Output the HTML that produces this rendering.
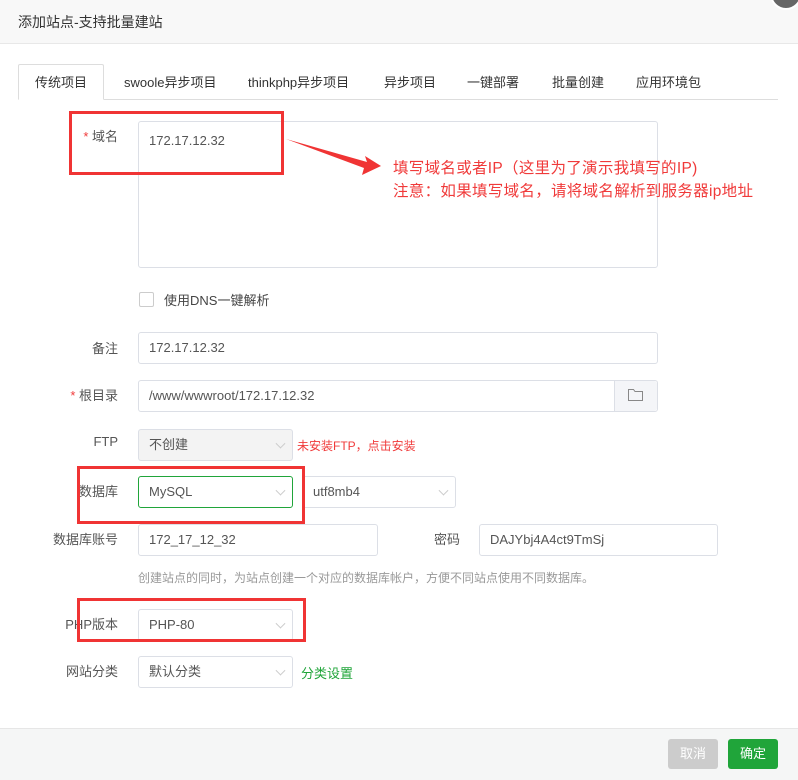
<!DOCTYPE html>
<html><head><meta charset="utf-8"><style>
*{box-sizing:border-box;margin:0;padding:0}
body{width:798px;height:780px;background:#fff;font-family:"Liberation Sans","Noto Sans CJK SC",sans-serif;font-size:13px;color:#555;position:relative;overflow:hidden}
.a{position:absolute}
.hdr{left:0;top:0;width:798px;height:44px;background:#f8f8f8;border-bottom:1px solid #e8e8e8;font-size:14px;color:#333;padding:12px 0 0 18px}
.tabline{left:18px;top:99px;width:760px;height:1px;background:#ddd}
.tab{top:65px;height:36px;line-height:36px;font-size:13px;color:#333}
.act{left:18px;top:64px;width:86px;border:1px solid #ddd;border-bottom:1px solid #fff;text-align:center;background:#fff;border-radius:2px 2px 0 0}
.lbl{width:100px;left:18px;text-align:right;color:#555;font-size:13px}
.inp{border:1px solid #dcdfe6;border-radius:3px;background:#fff;padding-left:10px;color:#555;font-size:13px}
.chev{position:absolute;right:8px;top:50%;width:7px;height:7px;border-right:1px solid #ccc;border-bottom:1px solid #ccc;transform:translateY(-70%) rotate(45deg)}
.rb{border:3px solid #f03434}
.red{color:#f03a3a}
</style></head><body>
<div class="a hdr">添加站点-支持批量建站</div>
<div class="a" style="left:770px;top:-22px;width:32px;height:32px;border-radius:50%;background:#666;border:2px solid #fff"></div>
<div class="a tabline"></div>
<div class="a tab act">传统项目</div>
<div class="a tab" style="left:124px">swoole异步项目</div>
<div class="a tab" style="left:248px">thinkphp异步项目</div>
<div class="a tab" style="left:384px">异步项目</div>
<div class="a tab" style="left:467px">一键部署</div>
<div class="a tab" style="left:552px">批量创建</div>
<div class="a tab" style="left:636px">应用环境包</div>

<div class="a lbl" style="top:126px"><span class="red">* </span>域名</div>
<div class="a inp" style="left:138px;top:121px;width:520px;height:147px;padding-top:11px">172.17.12.32</div>

<div class="a" style="left:139px;top:292px;width:15px;height:15px;border:1px solid #ccc;border-radius:2px"></div>
<div class="a" style="left:164px;top:290px;color:#444">使用DNS一键解析</div>

<div class="a lbl" style="top:338px">备注</div>
<div class="a inp" style="left:138px;top:332px;width:520px;height:32px;line-height:30px">172.17.12.32</div>

<div class="a lbl" style="top:385px"><span class="red">* </span>根目录</div>
<div class="a inp" style="left:138px;top:380px;width:520px;height:32px;line-height:30px">/www/wwwroot/172.17.12.32</div>
<div class="a" style="left:614px;top:381px;width:43px;height:30px;background:#f4f5f8;border-left:1px solid #dcdfe6;border-radius:0 3px 3px 0"></div>
<svg class="a" style="left:628px;top:389px" width="15" height="12" viewBox="0 0 15 12"><path d="M0.5 0.5H5.5L7 2.5H14.5V11.5H0.5Z" fill="none" stroke="#888"/></svg>

<div class="a lbl" style="top:434px">FTP</div>
<div class="a inp" style="left:138px;top:429px;width:155px;height:32px;line-height:30px;background:#f3f3f3">不创建<span class="chev"></span></div>
<div class="a red" style="left:297px;top:437px;font-size:12px">未安装FTP，点击安装</div>

<div class="a lbl" style="top:481px">数据库</div>
<div class="a inp" style="left:138px;top:476px;width:155px;height:32px;line-height:30px;border-color:#20a53a">MySQL<span class="chev"></span></div>
<div class="a inp" style="left:302px;top:476px;width:154px;height:32px;line-height:30px">utf8mb4<span class="chev"></span></div>

<div class="a lbl" style="top:529px">数据库账号</div>
<div class="a inp" style="left:138px;top:524px;width:240px;height:32px;line-height:30px">172_17_12_32</div>
<div class="a" style="left:434px;top:529px">密码</div>
<div class="a inp" style="left:479px;top:524px;width:239px;height:32px;line-height:30px">DAJYbj4A4ct9TmSj</div>
<div class="a" style="left:138px;top:569px;font-size:12px;color:#999">创建站点的同时，为站点创建一个对应的数据库帐户，方便不同站点使用不同数据库。</div>

<div class="a lbl" style="top:614px">PHP版本</div>
<div class="a inp" style="left:138px;top:609px;width:155px;height:32px;line-height:30px">PHP-80<span class="chev"></span></div>

<div class="a lbl" style="top:661px">网站分类</div>
<div class="a inp" style="left:138px;top:656px;width:155px;height:32px;line-height:30px">默认分类<span class="chev"></span></div>
<div class="a" style="left:301px;top:663px;color:#20a53a">分类设置</div>

<div class="a" style="left:0;top:728px;width:798px;height:52px;background:#f5f6f6;border-top:1px solid #e6e6e6"></div>
<div class="a" style="left:668px;top:739px;width:50px;height:30px;background:#ccc;color:#fff;border-radius:3px;text-align:center;line-height:30px">取消</div>
<div class="a" style="left:728px;top:739px;width:50px;height:30px;background:#20a53a;color:#fff;border-radius:3px;text-align:center;line-height:30px">确定</div>

<div class="a rb" style="left:69px;top:111px;width:215px;height:64px"></div>
<div class="a rb" style="left:77px;top:466px;width:228px;height:58px"></div>
<div class="a rb" style="left:77px;top:598px;width:229px;height:44px"></div>
<svg class="a" style="left:280px;top:130px" width="110" height="50"><path d="M6 9L87 32L85 26L101 36L82 45L84 38Z" fill="#f03434"/></svg>
<div class="a red" style="left:393px;top:157px;font-size:15.5px;line-height:23px;letter-spacing:0.3px">填写域名或者IP（这里为了演示我填写的IP)<br>注意：如果填写域名，请将域名解析到服务器ip地址</div>
</body></html>
